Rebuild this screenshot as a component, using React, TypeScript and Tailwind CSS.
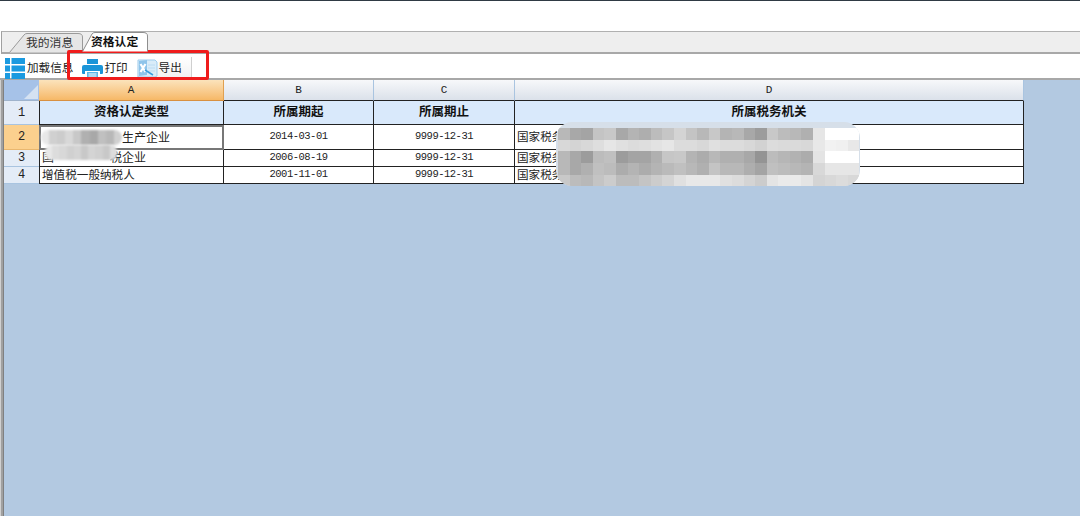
const FONT = "font-['Liberation_Sans','Noto_Sans_CJK_SC',sans-serif]";
const M = "font-['Liberation_Mono','Noto_Sans_CJK_SC',monospace]";

const mosaic: string[] = [
  "b8 a8 a4 c4 c8 a8 b4 ae bc c6 d4 c4 b8 c8 b4 b8 a8 9c c8 bc b8 b0 e6 ff ff ff",
  "d8 d4 d8 de e6 e0 dc de e2 e6 dc dc d8 e0 dc dc d8 d2 dc da da d8 e8 f2 f0 e8",
  "b8 a8 9c bc c0 9c a4 a4 b0 c6 c8 b4 ac b8 b0 b0 a8 94 bc b6 b2 ac e4 ff ff ff",
  "b8 a8 b0 c0 bc ac b4 ac b4 ba c0 b8 b0 c4 b8 b8 ae a4 c0 bc b8 b4 d8 e6 e6 e6",
  "c8 bc b8 c4 cc bc bc c4 cc d4 e0 e8 e8 e8 e0 dc d4 cc e4 ea ea e4 d4 d8 dc d8",
];

function Printer() {
  return (
    <svg width="21" height="21" viewBox="0 0 21 21">
      <path d="M5 1h11v5H5z" fill="#1b95d8" />
      <path d="M2 7h17a2 2 0 0 1 2 2v6a1 1 0 0 1-1 1h-2v-3H3v3H1a1 1 0 0 1-1-1V9a2 2 0 0 1 2-2z" fill="#1b95d8" />
      <path d="M5 14h11v6H5z" fill="#5ab5e6" />
      <path d="M6.5 16h8M6.5 18h8" stroke="#fff" strokeWidth="1" />
    </svg>
  );
}

function ExcelIcon() {
  return (
    <svg width="21" height="20" viewBox="0 0 21 20">
      <path d="M1 2h17l2 2v14l-2 1H1z" fill="#d9ecf9" stroke="#9fcdee" />
      <path d="M2 3l8 -1v15l-8 1z" fill="#8fc4ea" />
      <path d="M3.500 6l5 8M8.500 6l-5 8" stroke="#fff" strokeWidth="2.200" />
      <path d="M11 7h7M11 10h7M11 13h7" stroke="#bcdcf3" />
      <path d="M8 12l8 5" stroke="#3a9bdc" strokeWidth="1.500" />
    </svg>
  );
}

function Tab({ label, active }: { label: string; active?: boolean }) {
  return (
    <div className={`relative flex items-center pt-[2px] ${active ? "h-[20px] w-[66px] -ml-[1px] z-10 pl-[9px] font-bold text-[#111] text-[11.8px]" : "h-[19px] w-[74px] pl-[17px] text-[#333] text-[11.8px]"}`}>
      <svg className="absolute left-0 top-0" width={active ? 66 : 74} height="20" viewBox={active ? "0 0 66 20" : "0 0 74 20"}>
        {active ? (
          <path d="M0.5 19.500L10 2Q11 0.500 13 0.500H61Q65.500 0.500 65.500 4V19.500" fill="#fff" stroke="#8e8e8e" />
        ) : (
          <path d="M0.500 19.500L15 2Q16 0.500 18 0.500H69Q73.500 0.500 73.500 4V19.500" fill="#e6e6e6" stroke="#9a9a9a" />
        )}
      </svg>
      <span className="relative">{label}</span>
    </div>
  );
}

function ColHead({ label, active }: { label: string; active?: boolean }) {
  return (
    <div className={`flex items-center justify-center text-[11px] text-[#222] border-r border-[#a9c4e0] border-b border-b-[#222] ${M} ${active ? "bg-gradient-to-b from-[#fbe3bb] to-[#f6b866] border-r-[#e0a050] border-b-[#d89040]" : "bg-gradient-to-b from-[#f7f8fa] to-[#dbe1ea]"}`}>
      {label}
    </div>
  );
}

function RowHead({ label, active }: { label: string; active?: boolean }) {
  return (
    <div className={`flex items-center justify-center text-[12px] text-[#222] border-b ${M} ${active ? "bg-[#fbd08e] border-[#e9b76f]" : "bg-[#e4ecf7] border-[#a9c4e0]"}`}>
      {label}
    </div>
  );
}

function Head({ label }: { label: string }) {
  return (
    <div className="flex items-center justify-center bg-[#d9e9fb] border-r border-b border-[#222] text-[12.5px] font-bold text-[#111]">
      {label}
    </div>
  );
}

function Cell({ children, center, mono }: { children: React.ReactNode; center?: boolean; mono?: boolean }) {
  return (
    <div className={`flex items-center bg-white border-r border-b border-[#222] overflow-hidden whitespace-nowrap text-[#222] ${center ? "justify-center" : "pl-[2px]"} ${mono ? `${M} text-[10.5px] tracking-[-0.5px]` : "text-[11.6px]"}`}>
      {children}
    </div>
  );
}

export default function App() {
  return (
    <div className={`relative w-[1080px] h-[516px] overflow-hidden flex flex-col bg-white ${FONT}`}>
      <div className="h-[1px] bg-[#2f3a44] shrink-0" />
      <div className="h-[30px] shrink-0 bg-white" />
      {/* tab strip */}
      <div className="h-[23px] shrink-0 flex items-end pl-[7px] bg-[#eeeeee] border-t border-t-[#b0b0b0] border-b-2 border-b-[#a8a8a8] border-l border-l-[#a0a0a0] ml-[1px]">
        <Tab label="我的消息" />
        <Tab label="资格认定" active />
      </div>
      {/* toolbar */}
      <div className="h-[26px] shrink-0 flex items-center bg-white pl-[5px] pt-[4px] text-[11.6px] text-[#222] border-b-2 border-b-[#a8a8a8]">
        <svg width="20" height="21" viewBox="0 0 20 21" className="shrink-0">
          <path d="M0 0h5v6H0zM6.500 0H20v6H6.500zM0 7.500h5v6H0zM6.500 7.500H20v6H6.500zM0 15h5v6H0zM6.500 15H20v6H6.500z" fill="#1b9ae0" />
        </svg>
        <span className="ml-[2px]">加载信息</span>
        <span className="ml-[9px] shrink-0 flex"><Printer /></span>
        <span className="ml-[1px]">打印</span>
        <div className="ml-[9px] h-[22px] w-[55px] flex items-center bg-gradient-to-b from-white to-[#f1f1f1] border-r border-r-[#cfcfcf]">
          <span className="shrink-0 flex"><ExcelIcon /></span>
          <span className="ml-[1px]">导出</span>
        </div>
      </div>
      {/* sheet */}
      <div className="flex-1 flex bg-[#b3c9e1]">
        <div className="w-[4px] shrink-0 bg-[#a0a0a0] border-l border-r border-l-[#d0d0d0] border-r-[#808080]" />
        <div className="w-[1020px] h-[104px] shrink-0 grid grid-cols-[35px_185px_150px_141px_509px] grid-rows-[21px_24px_25px_17px_17px]">
          <div className="relative bg-[#a6c2e8] border-b border-[#9fb3cc]">
            <div className="absolute right-[1px] bottom-[1px] w-0 h-0 border-l-[14px] border-l-transparent border-b-[14px] border-b-[#d5e2f2]" />
          </div>
          <ColHead label="A" active />
          <ColHead label="B" />
          <ColHead label="C" />
          <ColHead label="D" />

          <RowHead label="1" />
          <div className="flex items-center justify-center bg-[#d9e9fb] border-l border-r border-b border-[#222] text-[12.5px] font-bold text-[#111]">资格认定类型</div>
          <Head label="所属期起" />
          <Head label="所属期止" />
          <Head label="所属税务机关" />

          <RowHead label="2" active />
          <div className="flex items-center pl-[81px] bg-white border-2 border-[#777] text-[12px] text-[#222] whitespace-nowrap">生产企业</div>
          <Cell center mono>2014-03-01</Cell>
          <Cell center mono>9999-12-31</Cell>
          <Cell>国家税务局</Cell>

          <RowHead label="3" />
          <div className="flex items-center bg-white border-l border-r border-b border-[#222] text-[12px] text-[#222] whitespace-nowrap pl-[2px]">
            <span>国</span>
            <span className="ml-[56px]">税企业</span>
          </div>
          <Cell center mono>2006-08-19</Cell>
          <Cell center mono>9999-12-31</Cell>
          <Cell>国家税务局</Cell>

          <RowHead label="4" />
          <div className="flex items-center pl-[2px] bg-white border-l border-r border-b border-[#222] text-[11.6px] text-[#222]">增值税一般纳税人</div>
          <Cell center mono>2001-11-01</Cell>
          <Cell center mono>9999-12-31</Cell>
          <Cell>国家税务局</Cell>
        </div>
      </div>

      {/* red annotation */}
      <div className="absolute left-[67px] top-[50px] w-[142px] h-[30px] border-[3px] border-[#ef1c1c] rounded-[2px]" />

      {/* redaction mosaic over the tax office column */}
      <div className="absolute left-[556px] top-[122px] w-[304px] h-[64px] rounded-[16px] bg-[#d6dfe9] overflow-hidden blur-[0.6px]">
        <div className="mt-[6px] ml-[2px] grid grid-cols-[repeat(26,11.6px)] grid-rows-[12px_11px_12px_12px_11px]">
          {mosaic.flatMap((row, r) =>
            row.split(" ").map((v, c) => (
              <div key={`${r}-${c}`} style={{ backgroundColor: `#${v}${v}${v}` }} />
            )),
          )}
        </div>
      </div>

      {/* redactions over the qualification column */}
      <div className="absolute left-[41px] top-[130px] w-[81px] h-[15px] rounded-full overflow-hidden flex blur-[1px]">
        {["e8", "d0", "cc", "d8", "c8", "b0", "a8", "c0", "b8", "d0"].map((v, i) => (
          <div key={i} className="flex-1" style={{ backgroundColor: `#${v}${v}${v}` }} />
        ))}
      </div>
      <div className="absolute left-[45px] top-[145px] w-[72px] h-[15px] rounded-[6px] overflow-hidden flex blur-[1px]">
        {["e8", "dc", "d8", "d0", "d4", "c8", "d4", "d0", "c8", "dc"].map((v, i) => (
          <div key={i} className="flex-1" style={{ backgroundColor: `#${v}${v}${v}` }} />
        ))}
      </div>
    </div>
  );
}
